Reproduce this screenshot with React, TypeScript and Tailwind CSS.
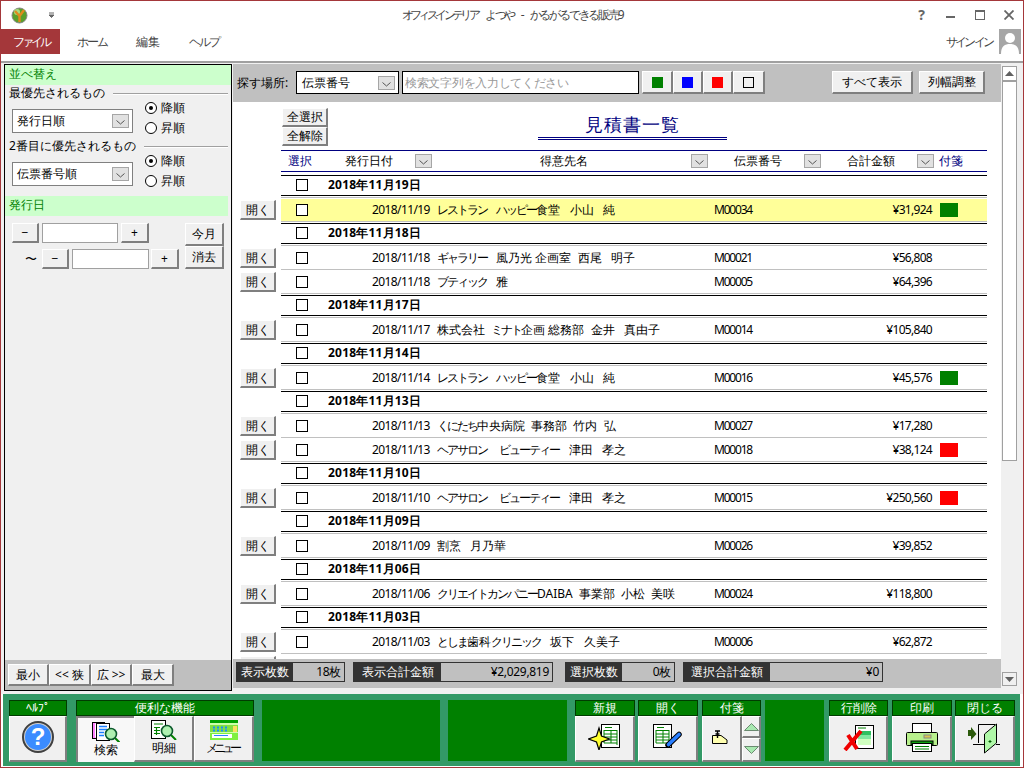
import React from "react";

const raised = "bg-[#f0f0f0] border-t border-l border-t-white border-l-white border-r-2 border-b-2 border-r-[#7f7f7f] border-b-[#7f7f7f] flex items-center justify-center shrink-0";

function Btn({ className, children }: { className: string; children?: React.ReactNode }) {
  return <div className={raised + " " + className}>{children}</div>;
}

function Chevron({ className = "" }: { className?: string }) {
  return (
    <div className={"w-[17px] h-[14px] bg-[#e1e1e1] border border-[#a6a6a6] flex items-center justify-center shrink-0 " + className}>
      <svg width="9" height="5" viewBox="0 0 9 5" className="mt-[3px]">
        <path d="M0.5 0.5 L4.5 4 L8.5 0.5" fill="none" stroke="#555" strokeWidth="1" />
      </svg>
    </div>
  );
}

function Radio({ on, label }: { on?: boolean; label: string }) {
  return (
    <div className="flex items-center h-[20px]">
      <div className="w-[12px] h-[12px] rounded-full border border-black bg-white flex items-center justify-center">
        {on && <div className="w-[4px] h-[4px] rounded-full bg-black" />}
      </div>
      <span className="ml-[4px]">{label}</span>
    </div>
  );
}

function SectionLabel({ text }: { text: string }) {
  return (
    <div className="h-[17px] flex items-center pl-[4px] pr-[3px]">
      <span className="whitespace-nowrap pb-[2px]">{text}</span>
      <div className="flex-1 ml-[8px] h-[2px] border-t border-t-[#a0a0a0] border-b border-b-white" />
    </div>
  );
}

function SortRow({ value, className }: { value: string; className: string }) {
  return (
    <div className={"flex pl-[7px] " + className}>
      <div className="w-[121px] h-[24px] mt-[7px] bg-white border border-[#808080] flex items-center pl-[4px] pr-[3px] justify-between">
        <span>{value}</span>
        <Chevron />
      </div>
      <div className="ml-[12px] -mt-[4px]">
        <Radio on label="降順" />
        <Radio label="昇順" />
      </div>
    </div>
  );
}

type Row = { g?: string; date?: string; name?: string; code?: string; amt?: string; tag?: string; hi?: boolean };

const rows: Row[] = [
  { g: "2018年11月19日" },
  { date: "2018/11/19", name: "レストラン   ハッピー食堂   小山   純", code: "M00034", amt: "¥31,924", tag: "bg-[#008000]", hi: true },
  { g: "2018年11月18日" },
  { date: "2018/11/18", name: "ギャラリー   風乃光 企画室  西尾   明子", code: "M00021", amt: "¥56,808" },
  { date: "2018/11/18", name: "ブティック   雅", code: "M00005", amt: "¥64,396" },
  { g: "2018年11月17日" },
  { date: "2018/11/17", name: "株式会社  ミナト企画 総務部  金井   真由子", code: "M00014", amt: "¥105,840" },
  { g: "2018年11月14日" },
  { date: "2018/11/14", name: "レストラン   ハッピー食堂   小山   純", code: "M00016", amt: "¥45,576", tag: "bg-[#008000]" },
  { g: "2018年11月13日" },
  { date: "2018/11/13", name: "くにたち中央病院  事務部  竹内  弘", code: "M00027", amt: "¥17,280" },
  { date: "2018/11/13", name: "ヘアサロン    ビューティー   津田   孝之", code: "M00018", amt: "¥38,124", tag: "bg-[#ff0000]" },
  { g: "2018年11月10日" },
  { date: "2018/11/10", name: "ヘアサロン    ビューティー   津田   孝之", code: "M00015", amt: "¥250,560", tag: "bg-[#ff0000]" },
  { g: "2018年11月09日" },
  { date: "2018/11/09", name: "割烹   月乃華", code: "M00026", amt: "¥39,852" },
  { g: "2018年11月06日" },
  { date: "2018/11/06", name: "クリエイトカンパニーDAIBA  事業部  小松  美咲", code: "M00024", amt: "¥118,800" },
  { g: "2018年11月03日" },
  { date: "2018/11/03", name: "としま歯科クリニック   坂下   久美子", code: "M00006", amt: "¥62,872" },
  {},
];

function Kana({ text }: { text: string }) {
  const parts = text.split(/([ぁ-んァ-ヶー]+)/);
  return (
    <>
      {parts.map((p, i) =>
        i % 2 === 1 ? (
          <span key={i} className="tracking-[-2px]">{p}</span>
        ) : (
          <span key={i}>{p}</span>
        )
      )}
    </>
  );
}

function Check() {
  return <div className="w-[12px] h-[12px] border border-black bg-white shrink-0" />;
}

function ListRow({ r }: { r: Row }) {
  if (r.g) {
    return (
      <div className="h-[24px] ml-[48px] w-[706px]">
        <div className="h-[20px] border-t border-t-black flex items-center pl-[15px]">
          <div className="-mt-[1px]"><Check /></div>
          <span className="ml-[20px] pb-[1px] font-bold tracking-[0.2px]">{r.g}</span>
        </div>
        <div className="h-[2px] border-t border-t-black" />
        <div className="h-[2px] border-t border-t-[#c0c0c0]" />
      </div>
    );
  }
  return (
    <div className="h-[24px] flex">
      <div className="w-[48px] pl-[7px] pt-[1px]">
        <Btn className="w-[36px] h-[20px]">{r.date ? "開く" : null}</Btn>
      </div>
      <div className={"w-[706px] h-[23px] border-b border-b-[#c0c0c0] flex items-center pl-[15px] " + (r.hi ? "bg-[#ffff99]" : "")}>
        {r.date && (
          <>
            <Check />
            <span className="ml-[64px] w-[59px] tracking-[-0.6px] whitespace-nowrap pb-[1px]">{r.date}</span>
            <span className="ml-[6px] w-[277px] whitespace-pre pb-[1px]"><Kana text={r.name ?? ""} /></span>
            <span className="w-[150px] tracking-[-1.2px] pb-[1px]">{r.code}</span>
            <span className="w-[69px] text-right tracking-[-0.7px] pb-[1px] pr-[1px]">{r.amt}</span>
            {r.tag && <div className={"ml-[7px] w-[18px] h-[14px] " + r.tag} />}
          </>
        )}
      </div>
    </div>
  );
}

function Stat({ label, value, w, lw }: { label: string; value: string; w: string; lw: string }) {
  return (
    <div className={"h-[20px] flex border border-[#333] " + w}>
      <div className={"bg-[#333] text-white h-full flex items-center justify-center whitespace-nowrap " + lw}>{label}</div>
      <div className="flex-1 bg-[#c0c0c0] h-full flex items-center justify-end pr-[3px] whitespace-nowrap tracking-[-0.3px]">{value}</div>
    </div>
  );
}

function Group({ title, w, className = "", children }: { title: string; w: string; className?: string; children: React.ReactNode }) {
  return (
    <div className={"shrink-0 " + w + " " + className}>
      <div className="h-[16px] bg-[#008000] border border-[#003c00] text-white flex items-center justify-center">{title}</div>
      <div className="flex">{children}</div>
    </div>
  );
}

const fb = "h-[46px] flex-col";
const fbt = "h-[46px] flex-col pb-[4px]";

function IcoLogo() {
  return (
    <svg width="17" height="17" viewBox="0 0 17 17">
      <circle cx="8.5" cy="8.5" r="7.5" fill="#5aa02c" stroke="#888" strokeWidth="1" />
      <circle cx="6" cy="5" r="3" fill="#a8dc80" />
      <path d="M4 4 L8.5 9 L13 3 M8.5 9 L8.5 15" fill="none" stroke="#e08a1e" strokeWidth="2.4" />
    </svg>
  );
}

function IcoHelp() {
  return (
    <svg width="32" height="32" viewBox="0 0 32 32" className="mb-[3px]">
      <circle cx="16" cy="16" r="15" fill="#d0d0d0" stroke="#404040" strokeWidth="2" />
      <circle cx="16" cy="16" r="13" fill="#3b8cff" />
      <text x="16" y="24" textAnchor="middle" fontSize="24" fontWeight="bold" fill="#fff" fontFamily="Liberation Sans">?</text>
    </svg>
  );
}

function Glass({ x, y }: { x: number; y: number }) {
  return (
    <g>
      <line x1={x + 3} y1={y + 3} x2={x + 9} y2={y + 9} stroke="#008000" strokeWidth="2" />
      <circle cx={x} cy={y} r="5.5" fill="#aef0b0" stroke="#0c5a2c" strokeWidth="1.6" />
    </g>
  );
}

function IcoSearch() {
  return (
    <svg width="28" height="20" viewBox="0 0 28 20">
      <rect x="0.5" y="0.5" width="12" height="16" fill="#ff80ff" stroke="#000" />
      <rect x="3" y="1.5" width="9" height="14" fill="#fff" />
      <rect x="4.5" y="1.5" width="13" height="17" fill="#fff" stroke="#000" />
      <path d="M7 4.5h8M7 7.5h8M7 10.5h5M7 13.5h5" stroke="#1a80ff" strokeWidth="1.4" />
      <Glass x={19} y={12} />
    </svg>
  );
}

function IcoDetail() {
  return (
    <svg width="26" height="20" viewBox="0 0 26 20">
      <rect x="0.5" y="0.5" width="14" height="18" fill="#fff" stroke="#000" />
      <path d="M3 4h9M3 7.5h6M3 10.5h6M3 13.5h6M5.5 7v8" stroke="#008000" strokeWidth="1.2" fill="none" />
      <Glass x={16} y={11} />
    </svg>
  );
}

function IcoMenu() {
  return (
    <svg width="28" height="20" viewBox="0 0 28 20">
      <rect x="0" y="0" width="28" height="20" fill="#ccffaa" />
      <rect x="0" y="0" width="28" height="3" fill="#00a000" />
      <rect x="0" y="5" width="28" height="7" fill="#80e040" />
      <path d="M3 6.5h2v2h-2zM7 6.5h2v2h-2zM11 6.5h2v2h-2zM15 6.5h2v2h-2zM3 9.5h2v2h-2zM7 9.5h2v2h-2zM11 9.5h2v2h-2zM15 9.5h2v2h-2z" fill="#1a8cff" />
      <rect x="23" y="6" width="4" height="6" fill="#ffe060" />
      <rect x="0" y="13" width="28" height="7" fill="#80f040" />
      <rect x="2" y="14" width="20" height="4" fill="#fff" />
      <rect x="4" y="15" width="14" height="1" fill="#2a80ff" />
    </svg>
  );
}

function GridDoc({ x }: { x: number }) {
  return (
    <g>
      <rect x={x + 0.5} y="0.5" width="18" height="23" fill="#fff" stroke="#000" />
      <path d={`M${x + 4} 3.5h7 M${x + 3} 6.5h13 M${x + 3} 10h13 M${x + 3} 13h13 M${x + 3} 16h13 M${x + 3} 19h13 M${x + 3} 6v13 M${x + 10} 6v13 M${x + 16} 6v15`} stroke="#008000" strokeWidth="1" fill="none" />
    </g>
  );
}

function IcoNew() {
  return (
    <svg width="33" height="26" viewBox="0 0 33 26" className="mb-[4px]">
      <GridDoc x={13} />
      <path d="M11 4 L13.5 12 L21.5 15 L13.5 18 L11 26 L8.5 18 L0.5 15 L8.5 12 Z" fill="#ffff30" stroke="#000" strokeWidth="1.2" />
    </svg>
  );
}

function IcoOpen() {
  return (
    <svg width="30" height="24" viewBox="0 0 30 24" className="mb-[5px]">
      <GridDoc x={0} />
      <path d="M15 21 L26 10.5" stroke="#000" strokeWidth="5.5" strokeLinecap="round" />
      <path d="M15.5 20.5 L26 10.5" stroke="#2a7fff" strokeWidth="3.6" strokeLinecap="round" />
    </svg>
  );
}

function IcoTag() {
  return (
    <svg width="16" height="14" viewBox="0 0 16 14" className="mb-[3px] mr-[3px]">
      <path d="M0.5 5.5 H9 L15 10 V13.5 H0.5 Z" fill="#ffffb0" stroke="#000" />
      <path d="M3 1 H8 M5.5 1 V8 M3.5 4 H7.5" stroke="#000" strokeWidth="1.4" fill="none" />
    </svg>
  );
}

function IcoDelete() {
  return (
    <svg width="31" height="26" viewBox="0 0 31 26" className="mb-[2px]">
      <rect x="12.5" y="0.5" width="18" height="23" fill="#fff" stroke="#000" />
      <rect x="15" y="6" width="13" height="4" fill="#30c060" />
      <rect x="15" y="10" width="13" height="4" fill="#80e8a0" />
      <rect x="15" y="14" width="13" height="6" fill="#d0ffc0" />
      <path d="M15 3h8" stroke="#008000" />
      <path d="M2 25 L18 6 M5 10 L14 24" stroke="#f00000" strokeWidth="4" fill="none" />
    </svg>
  );
}

function IcoPrint() {
  return (
    <svg width="32" height="29" viewBox="0 0 32 29" className="mb-[2px]">
      <rect x="6.5" y="0.5" width="19" height="9" fill="#fff" stroke="#000" />
      <rect x="0.5" y="9.5" width="31" height="13" rx="1" fill="#b8f08c" stroke="#000" />
      <rect x="5" y="18" width="22" height="4" fill="#10a010" stroke="#000" />
      <rect x="18" y="12" width="7" height="3" fill="#d8c850" stroke="#888" />
      <rect x="6.5" y="20.5" width="19" height="8" fill="#fff" stroke="#000" />
      <path d="M9 23.5h14M9 26h14" stroke="#008000" />
    </svg>
  );
}

function IcoExit() {
  return (
    <svg width="33" height="31" viewBox="0 0 33 31" className="mb-[1px]">
      <path d="M10.5 20 V1.5 H27" fill="none" stroke="#000" />
      <path d="M16.5 11 L28.5 1 V20 L16.5 30 Z" fill="#b0f8a8" stroke="#000" />
      <path d="M5 21.5 H16 M28 21.5 H32" stroke="#000" />
      <path d="M0 7 H3 V4 L8.5 11 L3 17 V13 H0 Z" fill="#2c5a0c" />
      <path d="M22 17 v3 M20.5 18.5 h3" stroke="#006000" />
    </svg>
  );
}

export default function App() {
  return (
    <div className="w-[1024px] h-[768px] border border-[#a4373a] bg-white overflow-hidden text-[12px] leading-none text-black [font-family:'Noto_Sans_CJK_JP',sans-serif]">
      {/* title bar */}
      <div className="h-[28px] flex items-center text-[#444]">
        <div className="w-[150px] flex items-center pl-[10px]">
          <IcoLogo />
          <svg width="7" height="6" viewBox="0 0 7 6" className="ml-[20px]">
            <path d="M1 1h5M1 3h5L3.5 5.5z" stroke="#666" fill="#666" strokeWidth="1" />
          </svg>
        </div>
        <div className="flex-1 flex justify-center whitespace-pre">
          <span className="tracking-[-3.6px]">オフィスインテリア</span>
          <span className="ml-[8px] tracking-[-2.5px]">よつや</span>
          <span className="ml-[7px]">-</span>
          <span className="ml-[5px] tracking-[-2.2px]">かるがるできる販売9</span>
        </div>
        <div className="w-[150px] flex justify-end">
          <div className="w-[29px] flex justify-center font-bold text-[14px] [font-family:'Liberation_Sans',sans-serif] text-[#666]">?</div>
          <div className="w-[29px] flex justify-center items-center">
            <div className="w-[9px] h-[2px] bg-[#666] mt-[3px]" />
          </div>
          <div className="w-[29px] flex justify-center items-center">
            <div className="w-[10px] h-[10px] border border-[#666] border-t-2" />
          </div>
          <div className="w-[29px] flex justify-center items-center">
            <svg width="10" height="10" viewBox="0 0 10 10">
              <path d="M0.5 0.5 L9.5 9.5 M9.5 0.5 L0.5 9.5" stroke="#666" strokeWidth="1.8" />
            </svg>
          </div>
        </div>
      </div>

      {/* tabs */}
      <div className="h-[25px] flex items-stretch text-[#444]">
        <div className="w-[59px] bg-[#a4373a] text-white flex items-center justify-center tracking-[-3px]">ファイル</div>
        <div className="ml-[17px] w-[30px] flex items-center tracking-[-2px] whitespace-nowrap">ホーム</div>
        <div className="ml-[29px] flex items-center">編集</div>
        <div className="ml-[29px] w-[30px] flex items-center tracking-[-2px] whitespace-nowrap">ヘルプ</div>
        <div className="ml-auto w-[46px] flex items-center tracking-[-2.8px] whitespace-nowrap">サインイン</div>
        <div className="ml-[7px] mr-[2px] w-[22px] bg-[#a6a6a6] overflow-hidden">
          <svg width="22" height="25" viewBox="0 0 22 25">
            <circle cx="11" cy="9" r="5" fill="#fff" />
            <path d="M2 25 C2 17 6 15 11 15 C16 15 20 17 20 25 Z" fill="#fff" />
          </svg>
        </div>
      </div>
      <div className="h-[7px]" />

      {/* main */}
      <div className="h-[633px] border-t-2 border-t-[#a0a0a0] bg-[#f0f0f0] flex pl-[3px] pt-[1px]">
        {/* left panel */}
        <div className="w-[228px] h-[627px] border border-black flex flex-col">
          <div className="h-[20px] bg-[#ccffcc] text-[#008000] flex items-center pl-[4px] pb-[2px]">並べ替え</div>
          <SectionLabel text="最優先されるもの" />
          <SortRow value="発行日順" className="h-[36px]" />
          <SectionLabel text="2番目に優先されるもの" />
          <SortRow value="伝票番号順" className="h-[41px]" />
          <div className="h-[20px] mr-[3px] bg-[#ccffcc] text-[#008000] flex items-center pl-[4px] pb-[2px]">発行日</div>
          <div className="flex mt-[7px]">
            <div className="w-[180px]">
              <div className="flex pl-[7px]">
                <Btn className="w-[27px] h-[20px]">−</Btn>
                <div className="ml-[3px] w-[76px] h-[20px] bg-white border border-[#a0a0a0]" />
                <Btn className="ml-[3px] w-[28px] h-[20px]">+</Btn>
              </div>
              <div className="flex pl-[20px] mt-[6px]">
                <div className="w-[17px] h-[20px] flex items-center">〜</div>
                <Btn className="w-[27px] h-[20px]">−</Btn>
                <div className="ml-[3px] w-[77px] h-[20px] bg-white border border-[#a0a0a0]" />
                <Btn className="ml-[2px] w-[28px] h-[20px]">+</Btn>
              </div>
            </div>
            <div>
              <Btn className="w-[39px] h-[23px]">今月</Btn>
              <Btn className="w-[39px] h-[23px]">消去</Btn>
            </div>
          </div>
          <div className="mt-auto h-[30px] bg-[#bfbfbf] flex pt-[4px] pl-[3px]">
            <Btn className="w-[41px] h-[22px]">最小</Btn>
            <Btn className="w-[42px] h-[22px]">{"<< 狭"}</Btn>
            <Btn className="w-[41px] h-[22px]">{"広 >>"}</Btn>
            <Btn className="w-[42px] h-[22px]">最大</Btn>
          </div>
        </div>

        {/* right side */}
        <div className="ml-[1px] w-[768px] h-[624px] flex flex-col">
          <div className="h-[38px] bg-[#c0c0c0] flex items-start pt-[7px] pl-[4px] pr-[16px]">
            <div className="w-[59px] h-[23px] flex items-center whitespace-nowrap">探す場所:</div>
            <div className="w-[103px] h-[23px] bg-white border border-black flex items-center justify-between pl-[5px] pr-[3px]">
              <span>伝票番号</span>
              <Chevron />
            </div>
            <div className="ml-[3px] w-[237px] h-[23px] bg-white border border-black flex items-center pl-[2px] text-[#999] tracking-[-0.3px]">検索文字列を入力してください</div>
            <Btn className="ml-[3px] w-[31px] h-[23px]"><div className="w-[11px] h-[11px] bg-[#008000]" /></Btn>
            <Btn className="w-[30px] h-[23px]"><div className="w-[11px] h-[11px] bg-[#0000ff]" /></Btn>
            <Btn className="w-[30px] h-[23px]"><div className="w-[11px] h-[11px] bg-[#ff0000]" /></Btn>
            <Btn className="w-[32px] h-[23px]"><div className="w-[11px] h-[11px] border border-black" /></Btn>
            <Btn className="ml-auto w-[81px] h-[23px]">すべて表示</Btn>
            <Btn className="ml-[6px] w-[66px] h-[23px]">列幅調整</Btn>
          </div>

          <div className="h-[557px] bg-white overflow-hidden">
            <div className="h-[48px] flex">
              <div className="ml-[49px] w-[46px] pt-[6px]">
                <Btn className="w-[46px] h-[19px]">全選択</Btn>
                <Btn className="w-[46px] h-[19px]">全解除</Btn>
              </div>
              <div className="ml-[210px] w-[189px] h-[38px] pt-[13px]">
                <div className="h-[25px] border-b-[3px] border-double border-b-[#000080] text-center text-[#000080] text-[18px] tracking-[1px]">見積書一覧</div>
              </div>
            </div>
            <div className="ml-[48px] w-[706px] h-[22px] border-y border-y-[#000080] flex items-center">
              <div className="w-[64px] pl-[7px] text-[#000080]">選択</div>
              <div className="w-[70px]">発行日付</div>
              <Chevron />
              <div className="w-[108px]" />
              <div className="w-[151px]">得意先名</div>
              <Chevron />
              <div className="w-[26px]" />
              <div className="w-[70px]">伝票番号</div>
              <Chevron />
              <div className="w-[26px]" />
              <div className="w-[70px]">合計金額</div>
              <Chevron />
              <div className="ml-[5px] text-[#000080]">付箋</div>
            </div>
            <div className="h-[3px]" />
            {rows.map((r, i) => (
              <ListRow key={i} r={r} />
            ))}
          </div>

          <div className="h-[29px] bg-[#c0c0c0] flex pt-[3px] pl-[3px]">
            <Stat label="表示枚数" value="18枚" w="w-[109px]" lw="w-[56px]" />
            <div className="w-[8px]" />
            <Stat label="表示合計金額" value="¥2,029,819" w="w-[200px]" lw="w-[87px]" />
            <div className="w-[12px]" />
            <Stat label="選択枚数" value="0枚" w="w-[110px]" lw="w-[56px]" />
            <div className="w-[8px]" />
            <Stat label="選択合計金額" value="¥0" w="w-[200px]" lw="w-[86px]" />
          </div>
        </div>

        {/* scrollbar */}
        <div className="ml-[1px] w-[15px] h-[624px] bg-[#f0f0f0] flex flex-col pt-[2px]">
          <div className="h-[15px] bg-white border border-[#a0a0a0] flex items-center justify-center">
            <svg width="9" height="5" viewBox="0 0 9 5"><path d="M0 5 L4.5 0 L9 5Z" fill="#606060" /></svg>
          </div>
          <div className="h-[380px] bg-white border border-[#a0a0a0]" />
          <div className="mt-auto mb-[2px] h-[14px] bg-[#f0f0f0] border border-[#a0a0a0] flex items-center justify-center">
            <svg width="9" height="5" viewBox="0 0 9 5"><path d="M0 0 L4.5 5 L9 0Z" fill="#606060" /></svg>
          </div>
        </div>
      </div>

      {/* footer */}
      <div className="h-[72px] ml-[2px] mr-[3px] bg-[#339966] flex pl-[6px] pt-[6px]">
        <Group title="ﾍﾙﾌﾟ" w="w-[58px]">
          <Btn className={"w-[58px] " + fb}><IcoHelp /></Btn>
        </Group>
        <Group title="便利な機能" w="w-[178px]" className="ml-[9px]">
          <div className="w-[58px] h-[46px] bg-[#f8f8f8] border-t-2 border-l-2 border-t-[#808080] border-l-[#808080] flex flex-col items-center justify-center pb-[2px]">
            <IcoSearch />
            <span className="mt-[2px]">検索</span>
          </div>
          <Btn className={"w-[60px] " + fbt}>
            <IcoDetail />
            <span className="mt-[2px]">明細</span>
          </Btn>
          <Btn className={"w-[60px] " + fbt}>
            <IcoMenu />
            <span className="mt-[2px] tracking-[-4px] pr-[4px]">メニュー</span>
          </Btn>
        </Group>
        <div className="ml-[8px] w-[178px] h-[61px] bg-[#008000]" />
        <div className="ml-[8px] w-[119px] h-[61px] bg-[#008000]" />
        <Group title="新規" w="w-[60px]" className="ml-[8px]">
          <Btn className={"w-[60px] " + fb}><IcoNew /></Btn>
        </Group>
        <Group title="開く" w="w-[60px]" className="ml-[3px]">
          <Btn className={"w-[60px] " + fb}><IcoOpen /></Btn>
        </Group>
        <Group title="付箋" w="w-[59px]" className="ml-[4px]">
          <Btn className={"w-[40px] " + fb}><IcoTag /></Btn>
          <div className="w-[19px]">
            <Btn className="w-[19px] h-[22px]">
              <svg width="15" height="8" viewBox="0 0 15 8"><path d="M0.5 7.5 L7.5 0.5 L14.5 7.5Z" fill="#a8e8b0" stroke="#6a8a70" /></svg>
            </Btn>
            <Btn className="w-[19px] h-[24px]">
              <svg width="15" height="8" viewBox="0 0 15 8"><path d="M0.5 0.5 L7.5 7.5 L14.5 0.5Z" fill="#a8e8b0" stroke="#6a8a70" /></svg>
            </Btn>
          </div>
        </Group>
        <div className="ml-[4px] w-[59px] h-[61px] bg-[#008000]" />
        <Group title="行削除" w="w-[59px]" className="ml-[5px]">
          <Btn className={"w-[59px] " + fb}><IcoDelete /></Btn>
        </Group>
        <Group title="印刷" w="w-[60px]" className="ml-[4px]">
          <Btn className={"w-[60px] " + fb}><IcoPrint /></Btn>
        </Group>
        <Group title="閉じる" w="w-[60px]" className="ml-[3px]">
          <Btn className={"w-[60px] " + fb}><IcoExit /></Btn>
        </Group>
      </div>
    </div>
  );
}
